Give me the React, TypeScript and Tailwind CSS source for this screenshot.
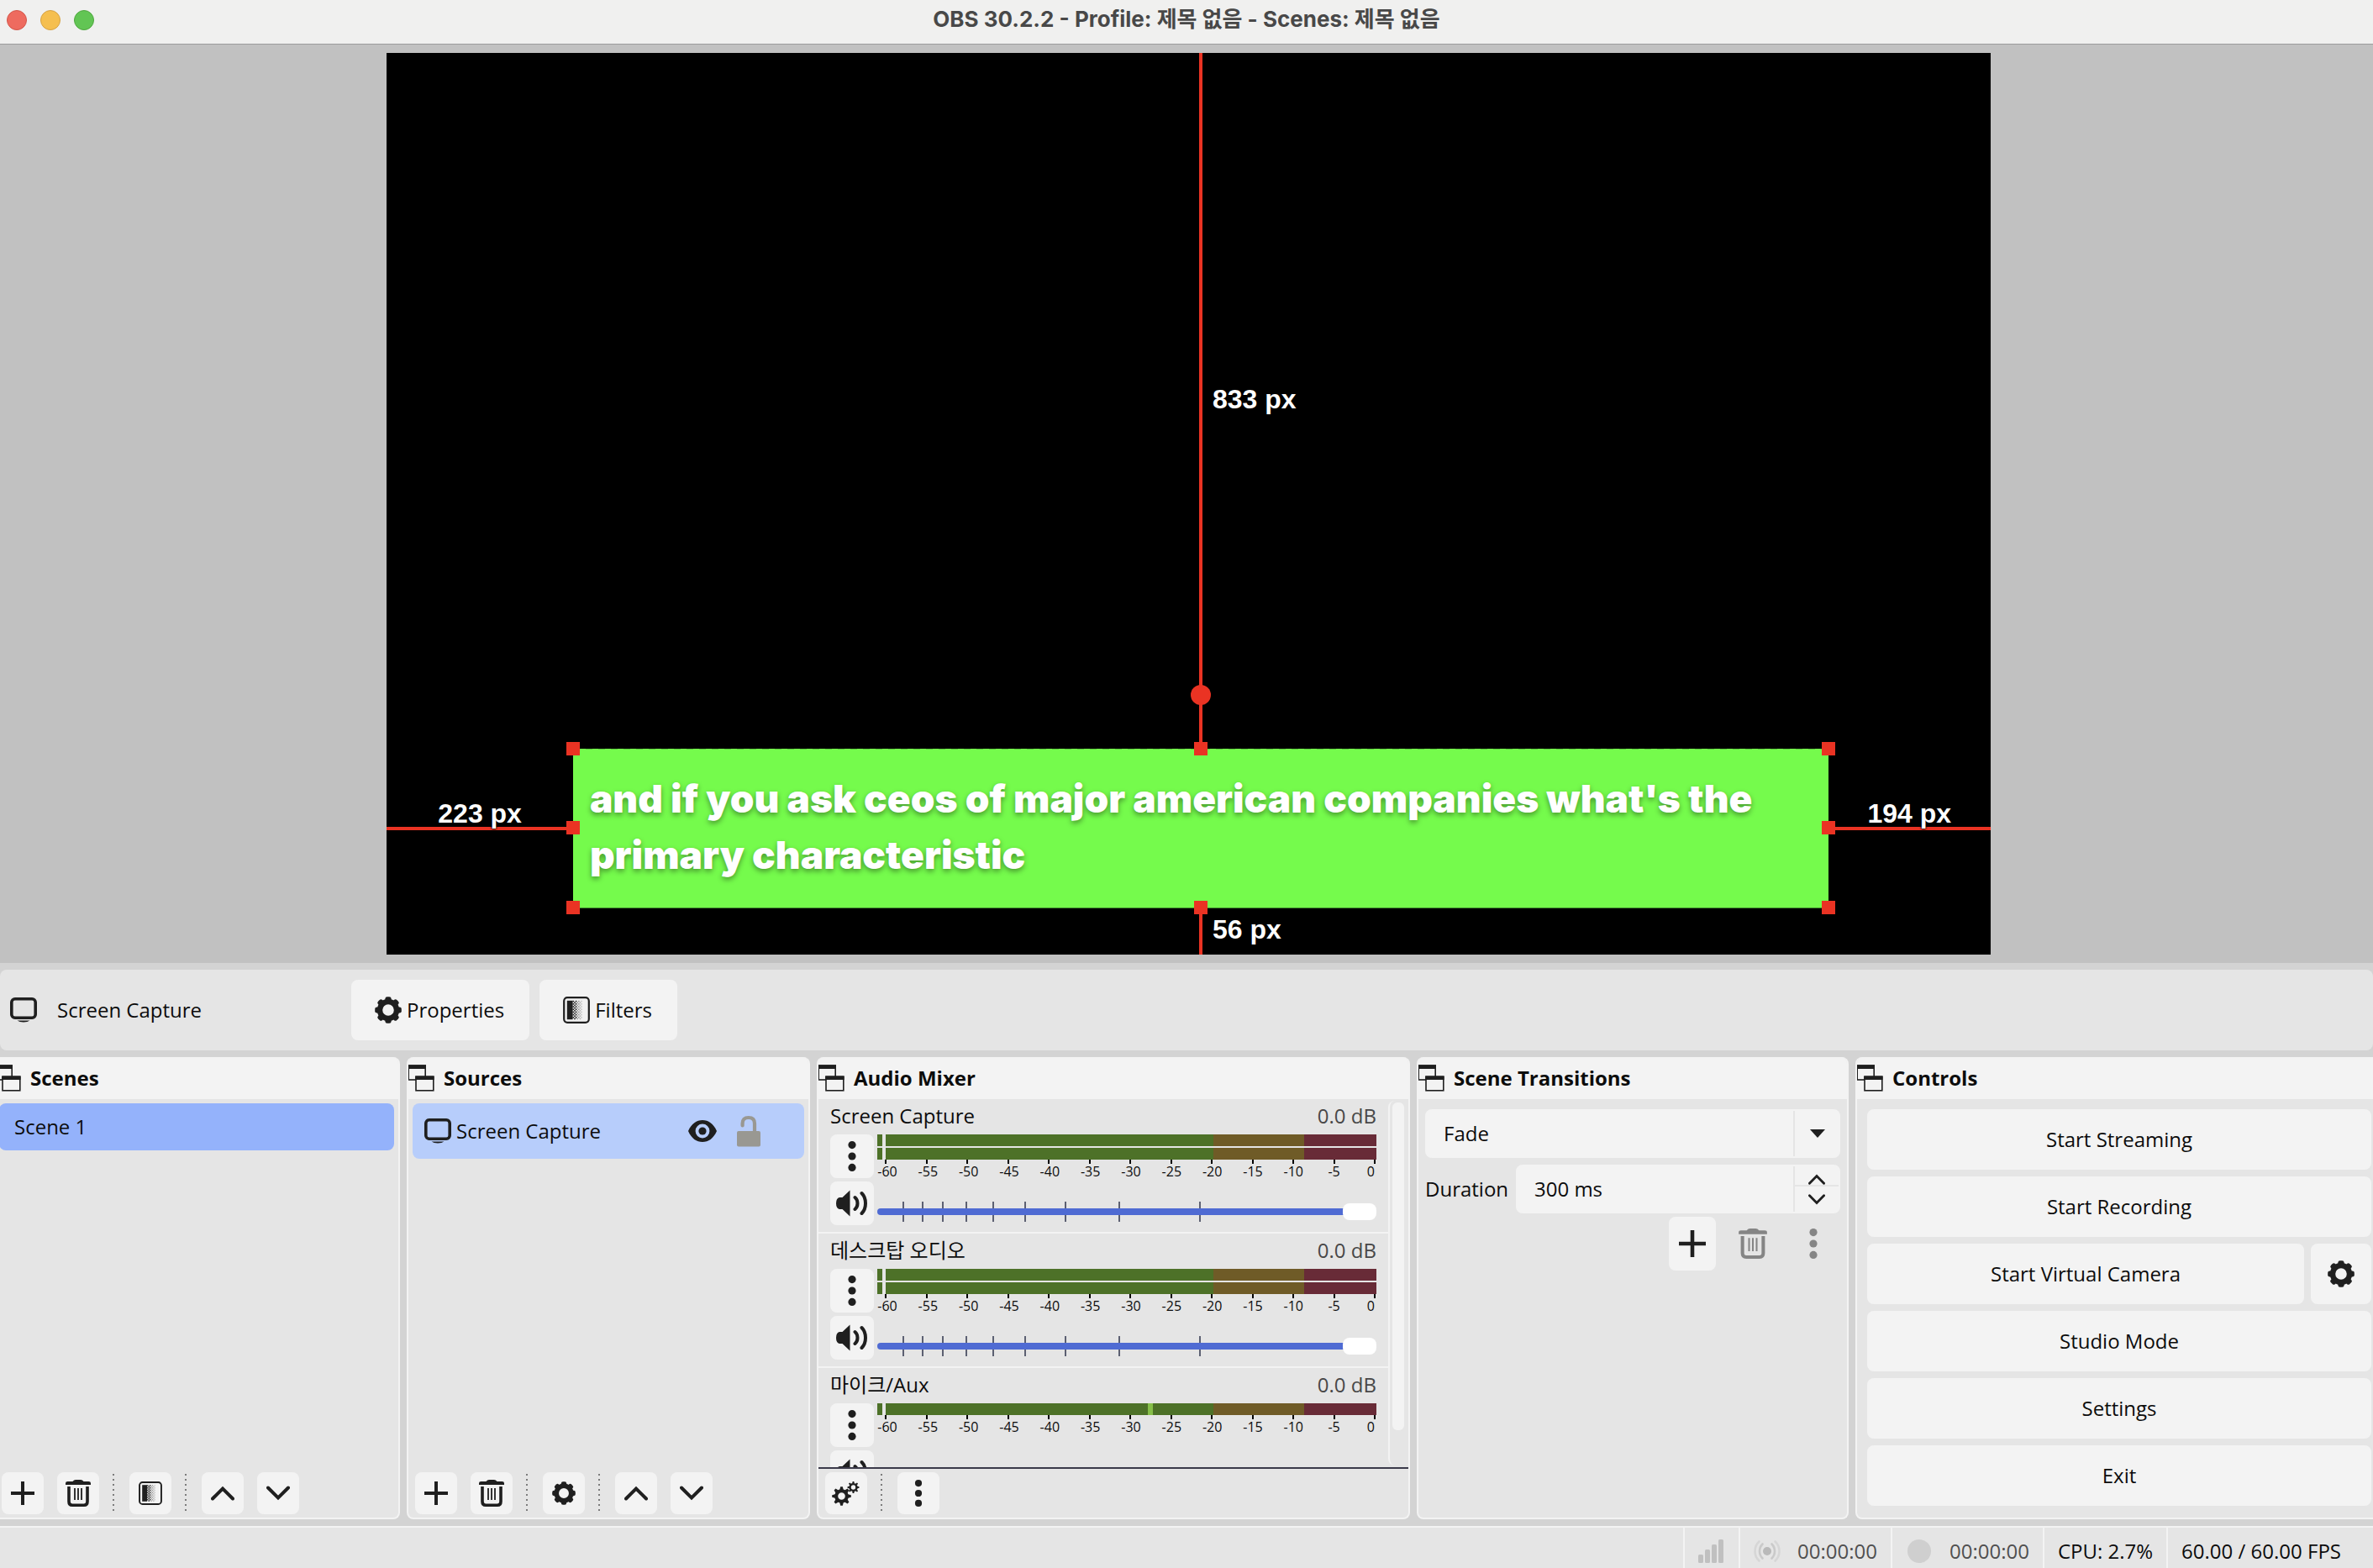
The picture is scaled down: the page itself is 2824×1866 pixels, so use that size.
import { useState, type ReactNode } from "react";

interface MixerChannel {
  name: string;
  level: string;
  bars: number;
  peak: boolean;
}

const channels: MixerChannel[] = [
  { name: "Screen Capture", level: "0.0 dB", bars: 2, peak: false },
  { name: "데스크탑 오디오", level: "0.0 dB", bars: 2, peak: false },
  { name: "마이크/Aux", level: "0.0 dB", bars: 1, peak: true },
];

const scaleLabels = [-60, -55, -50, -45, -40, -35, -30, -25, -20, -15, -10, -5, 0];

// fader detents, as a share of the track
const faderTicks = [5, 9, 13, 17.6, 23, 29.4, 37.5, 48.3, 64.4];

const gearTeeth = [0, 45, 90, 135, 180, 225, 270, 315];

// dither columns of the filter icon, fading to the right
const ditherColumns = ["#1f1f1f", "#1f1f1f", "#1f1f1f", "#9a9a9a", "#9a9a9a", "#b4b4b4", "#c9c9c9"];
const ditherRows = [0, 1, 2, 3, 4, 5, 6];

function GearIcon({ className }: { className: string }) {
  return (
    <svg viewBox="-16 -16 32 32" className={className} aria-hidden="true">
      <circle r="10" fill="none" stroke="#1f1f1f" strokeWidth="6.4" />
      {gearTeeth.map((angle) => (
        <rect
          key={angle}
          x="-3.6"
          y="-15.8"
          width="7.2"
          height="7"
          rx="2.4"
          fill="#1f1f1f"
          transform={`rotate(${angle})`}
        />
      ))}
    </svg>
  );
}

function GearsIcon() {
  return (
    <svg viewBox="0 0 34 30" className="h-[30px] w-[34px]" fill="#1f1f1f" aria-hidden="true">
      <g transform="translate(11.5 18.5)">
        <circle r="6.3" fill="none" stroke="#1f1f1f" strokeWidth="4" />
        {gearTeeth.map((angle) => (
          <path key={angle} d="M-2.4 -7L-1.3 -11.3H1.3L2.4 -7Z" transform={`rotate(${angle})`} />
        ))}
      </g>
      <g transform="translate(25.5 8)">
        <circle r="3.9" fill="none" stroke="#1f1f1f" strokeWidth="2.4" />
        {gearTeeth.map((angle) => (
          <path key={angle} d="M-1.4 -4.4L-0.8 -7H0.8L1.4 -4.4Z" transform={`rotate(${angle})`} />
        ))}
      </g>
    </svg>
  );
}

function MonitorIcon() {
  return (
    <svg viewBox="0 0 32 32" className="size-8 shrink-0" aria-hidden="true">
      <rect x="1.8" y="2.8" width="28.4" height="22.4" rx="4" fill="none" stroke="#1f1f1f" strokeWidth="3.6" />
      <path d="M8.5 28.6H23.5Q21 30.6 16 30.6T8.5 28.6Z" fill="#1f1f1f" />
    </svg>
  );
}

function FilterIcon({ className }: { className: string }) {
  return (
    <svg viewBox="0 0 32 32" className={className} aria-hidden="true">
      <rect x="1.2" y="1.2" width="29.6" height="29.6" rx="4" fill="none" stroke="#1f1f1f" strokeWidth="2.2" />
      <rect x="4.8" y="4.8" width="6.8" height="22.4" fill="#1f1f1f" />
      {ditherColumns.map((color, col) =>
        ditherRows.map((row) => (
          <rect
            key={`${col}-${row}`}
            x={11.6 + col * 1.6}
            y={4.8 + row * 3.2 + (col % 2) * 1.6}
            width="1.6"
            height="1.6"
            fill={color}
          />
        ))
      )}
    </svg>
  );
}

function PlusIcon({ className }: { className: string }) {
  return (
    <svg viewBox="0 0 28 28" className={className} aria-hidden="true">
      <path d="M14 0V28M0 14H28" stroke="#1f1f1f" strokeWidth="4" />
    </svg>
  );
}

function TrashIcon({ className }: { className: string }) {
  return (
    <svg viewBox="0 0 30 32" className={className} fill="currentColor" aria-hidden="true">
      <path d="M0 6V4Q0 2 2.5 2H8.5Q10 0 12 0H18Q20 0 21.5 2H27.5Q30 2 30 4V6Z" />
      <path d="M4 8V26Q4 30.2 8 30.2H22Q26 30.2 26 26V8" fill="none" stroke="currentColor" strokeWidth="3.6" />
      <path d="M11 10V24M15 10V24M19 10V24" stroke="currentColor" strokeWidth="1.8" />
    </svg>
  );
}

function ChevronIcon({ down = false, className }: { down?: boolean; className: string }) {
  return (
    <svg viewBox="0 0 28 18" className={className} aria-hidden="true">
      <path
        d={down ? "M2 2.5L14 14.5L26 2.5" : "M2 15.5L14 3.5L26 15.5"}
        fill="none"
        stroke="#1f1f1f"
        strokeWidth="4"
        strokeLinecap="round"
      />
    </svg>
  );
}

function DotsIcon({ className }: { className: string }) {
  return (
    <svg viewBox="0 0 10 36" className={className} fill="currentColor" aria-hidden="true">
      <circle cx="5" cy="4.6" r="4.6" />
      <circle cx="5" cy="18" r="4.6" />
      <circle cx="5" cy="31.4" r="4.6" />
    </svg>
  );
}

function SpeakerIcon() {
  return (
    <svg viewBox="0 0 38 32" className="h-8 w-[38px]" aria-hidden="true">
      <path d="M0 16Q0 10 4 9H7.5L16.5 0.5V31.5L7.5 23H4Q0 22 0 16Z" fill="#1f1f1f" />
      <path
        d="M22.5 9Q25.5 11.5 25.5 16T22.5 23M30.5 4Q35 8.5 35 16T30.5 28"
        fill="none"
        stroke="#1f1f1f"
        strokeWidth="4"
        strokeLinecap="round"
      />
    </svg>
  );
}

function DockIcon() {
  return (
    <svg viewBox="1 0 32 32" className="size-8 shrink-0" aria-hidden="true">
      <rect x="1.2" y="1" width="20" height="17" fill="#f3f3f3" stroke="#1f1f1f" strokeWidth="1.6" />
      <rect x="0.4" y="0.4" width="21.6" height="4.6" fill="#1f1f1f" />
      <rect x="10" y="14.4" width="20.8" height="16.4" fill="#f3f3f3" stroke="#1f1f1f" strokeWidth="1.6" />
      <rect x="9.2" y="13.4" width="22.4" height="4.6" fill="#1f1f1f" />
    </svg>
  );
}

function Dock({ title, children }: { title: string; children: ReactNode }) {
  return (
    <section className="flex min-w-0 flex-col overflow-hidden rounded-lg border-2 border-t-0 border-[#f3f3f3] bg-[#e5e5e5]">
      <header className="flex h-[50px] shrink-0 items-center gap-2.5 bg-[#f3f3f3]">
        <DockIcon />
        <h2 className="font-bold">{title}</h2>
      </header>
      {children}
    </section>
  );
}

function ToolButton({ label, children }: { label: string; children: ReactNode }) {
  return (
    <button
      type="button"
      aria-label={label}
      className="flex size-[50px] items-center justify-center rounded-lg bg-[#f3f3f3]"
    >
      {children}
    </button>
  );
}

function ToolSeparator() {
  return (
    <div className="h-[46px] w-1 bg-[repeating-linear-gradient(#7c7c7c_0_2px,transparent_2px_6px)] bg-[length:2px_100%] bg-no-repeat" />
  );
}

function Toolbar({ children }: { children: ReactNode }) {
  return <div className="flex shrink-0 items-center gap-4 px-2 py-1">{children}</div>;
}

function Handle({ className }: { className: string }) {
  return <div className={`absolute size-4 -translate-1/2 bg-[#ea3323] ${className}`} />;
}

function Preview() {
  const label =
    "absolute font-['Liberation_Sans',sans-serif] text-[32px] leading-9 font-bold whitespace-nowrap text-white [text-shadow:0_0_3px_#000,0_0_2px_#000,0_0_2px_#000]";

  return (
    <div className="flex flex-1 items-center justify-center bg-[#c1c1c1] pl-[5px]">
      <div className="grid aspect-video w-[67.7%] grid-cols-[minmax(0,223fr)_minmax(0,1503fr)_minmax(0,194fr)] grid-rows-[minmax(0,833fr)_minmax(0,191fr)_minmax(0,56fr)] bg-black">
        <div className="relative col-start-2">
          <div className="absolute inset-y-0 left-1/2 w-1 -translate-x-1/2 bg-[#ea3323]" />
          <div className="absolute bottom-[52px] left-1/2 size-6 -translate-x-1/2 rounded-full bg-[#ea3323]" />
          <span className={`${label} top-1/2 left-1/2 -mt-0.5 ml-3.5 -translate-y-1/2`}>833 px</span>
        </div>

        <div className="relative col-start-1 row-start-2">
          <div className="absolute inset-x-0 top-1/2 h-1 -translate-y-1/2 bg-[#ea3323]" />
          <span className={`${label} bottom-1/2 left-1/2 -translate-x-1/2`}>223 px</span>
        </div>

        <div className="relative row-start-2 border-b border-[#3f8f2a] bg-[#75fb4c] pt-[26px] pl-5">
          <div className="absolute inset-x-0 top-0 h-px bg-[repeating-linear-gradient(90deg,#5fce3e_0_8px,transparent_8px_15px)]" />
          <p className="font-['Inter',sans-serif] text-[46px] leading-[67px] font-black text-white [text-shadow:0_3px_6px_rgba(0,0,0,0.4)]">
            and if you ask ceos of major american companies what's the
            <br />
            primary characteristic
          </p>
          <Handle className="top-0 left-0" />
          <Handle className="top-0 left-1/2" />
          <Handle className="top-0 left-full" />
          <Handle className="top-1/2 left-0" />
          <Handle className="top-1/2 left-full" />
          <Handle className="top-full left-0" />
          <Handle className="top-full left-1/2" />
          <Handle className="top-full left-full" />
        </div>

        <div className="relative row-start-2">
          <div className="absolute inset-x-0 top-1/2 h-1 -translate-y-1/2 bg-[#ea3323]" />
          <span className={`${label} bottom-1/2 left-1/2 -translate-x-1/2`}>194 px</span>
        </div>

        <div className="relative col-start-2 row-start-3">
          <div className="absolute inset-y-0 left-1/2 w-1 -translate-x-1/2 bg-[#ea3323]" />
          <span className={`${label} top-1/2 left-1/2 -mt-0.5 ml-3.5 -translate-y-1/2`}>56 px</span>
        </div>
      </div>
    </div>
  );
}

function ContextBar() {
  const button = "flex h-[72px] items-center gap-1.5 rounded-lg bg-[#f3f3f3] pr-[30px] pl-7";

  return (
    <div className="my-2 flex items-center rounded-lg bg-[#e5e5e5] py-3 pl-3">
      <div className="flex w-[406px] items-center gap-6">
        <MonitorIcon />
        <span>Screen Capture</span>
      </div>
      <div className="flex gap-3">
        <button type="button" className={button}>
          <GearIcon className="size-8" />
          Properties
        </button>
        <button type="button" className={button}>
          <FilterIcon className="size-8" />
          Filters
        </button>
      </div>
    </div>
  );
}

function ScenesDock() {
  return (
    <Dock title="Scenes">
      <ul className="flex-1 p-[5px]">
        <li className="flex h-14 items-center rounded-lg bg-[#94b2fb] px-[18px]">Scene 1</li>
      </ul>
      <Toolbar>
        <ToolButton label="Add scene">
          <PlusIcon className="size-7" />
        </ToolButton>
        <ToolButton label="Remove scene">
          <TrashIcon className="h-8 w-[30px] text-[#1f1f1f]" />
        </ToolButton>
        <ToolSeparator />
        <ToolButton label="Scene filters">
          <FilterIcon className="size-7" />
        </ToolButton>
        <ToolSeparator />
        <ToolButton label="Move scene up">
          <ChevronIcon className="h-[18px] w-7" />
        </ToolButton>
        <ToolButton label="Move scene down">
          <ChevronIcon down className="h-[18px] w-7" />
        </ToolButton>
      </Toolbar>
    </Dock>
  );
}

function SourcesDock() {
  return (
    <Dock title="Sources">
      <ul className="flex-1 p-[5px]">
        <li className="flex h-[66px] items-center rounded-lg bg-[#b7cdfb] pr-13 pl-3.5">
          <MonitorIcon />
          <span className="ml-1.5 flex-1">Screen Capture</span>
          <button type="button" aria-label="Hide source" className="mr-6">
            <svg viewBox="0 0 34 28" className="h-7 w-[34px]" aria-hidden="true">
              <path
                fillRule="evenodd"
                d="M0 14C4 5 10 1 17 1S30 5 34 14C30 23 24 27 17 27S4 23 0 14ZM17 5.6A8.4 8.4 0 1 0 17 22.4A8.4 8.4 0 1 0 17 5.6Z"
                fill="#1f1f1f"
              />
              <circle cx="17" cy="14" r="4.6" fill="#1f1f1f" />
            </svg>
          </button>
          <button type="button" aria-label="Lock source">
            <svg viewBox="0 0 28 38" className="h-[38px] w-7" aria-hidden="true">
              <rect y="19" width="28" height="18.6" rx="2" fill="#999892" />
              <path
                d="M6.6 12.5V10Q6.6 3 13.8 3T21 10V20"
                fill="none"
                stroke="#999892"
                strokeWidth="4.2"
                strokeLinecap="round"
              />
            </svg>
          </button>
        </li>
      </ul>
      <Toolbar>
        <ToolButton label="Add source">
          <PlusIcon className="size-7" />
        </ToolButton>
        <ToolButton label="Remove source">
          <TrashIcon className="h-8 w-[30px] text-[#1f1f1f]" />
        </ToolButton>
        <ToolSeparator />
        <ToolButton label="Source properties">
          <GearIcon className="size-7" />
        </ToolButton>
        <ToolSeparator />
        <ToolButton label="Move source up">
          <ChevronIcon className="h-[18px] w-7" />
        </ToolButton>
        <ToolButton label="Move source down">
          <ChevronIcon down className="h-[18px] w-7" />
        </ToolButton>
      </Toolbar>
    </Dock>
  );
}

function MeterBar({ peak }: { peak: boolean }) {
  return (
    <div className="flex h-[14px]">
      <div className="w-1.5 bg-[#4d7128]" />
      <div className="ml-1 flex flex-1">
        <div className="flex flex-[390] justify-end bg-[#4d7128]">
          {peak && <div className="mr-[72px] w-1.5 bg-[#86bf49]" />}
        </div>
        <div className="flex-[108] bg-[#6f5b27]" />
        <div className="flex-[86] bg-[#682b37]" />
      </div>
    </div>
  );
}

function Channel({ channel }: { channel: MixerChannel }) {
  const [volume, setVolume] = useState(100);

  return (
    <div className="border-b-2 border-[#f3f3f3] px-3.5 pt-1 pb-2">
      <div className="mb-1.5 flex justify-between leading-8">
        <span>{channel.name}</span>
        <span className="text-[#484848]">{channel.level}</span>
      </div>
      <div className="flex gap-1">
        <div className="flex flex-col gap-1">
          <button
            type="button"
            aria-label={`${channel.name} options`}
            className="flex size-[52px] items-center justify-center rounded-lg bg-[#f3f3f3] text-[#1f1f1f]"
          >
            <DotsIcon className="h-9 w-2.5" />
          </button>
          <button
            type="button"
            aria-label={`Mute ${channel.name}`}
            className="flex size-[52px] items-center justify-center rounded-lg bg-[#f3f3f3]"
          >
            <SpeakerIcon />
          </button>
        </div>
        <div className="flex flex-1 flex-col justify-between pb-1">
          <div>
            <div className="flex flex-col gap-0.5">
              {Array.from({ length: channel.bars }, (_, i) => (
                <MeterBar key={i} peak={channel.peak} />
              ))}
            </div>
            <div className="flex justify-between pr-px pl-[9px]">
              {scaleLabels.map((value) => (
                <div key={value} className="h-[5px] w-0.5 bg-black" />
              ))}
            </div>
            <div className="flex justify-between pr-0.5 pl-3 text-base leading-[18px]">
              {scaleLabels.map((value) => (
                <span key={value} className="flex w-0 justify-center last:justify-end">
                  {value}
                </span>
              ))}
            </div>
          </div>
          <div className="relative h-6">
            {faderTicks.map((tick) => (
              <div
                key={tick}
                className="absolute inset-y-0 w-0.5 bg-[#5c6072]"
                style={{ left: `${tick}%` }}
              />
            ))}
            <input
              type="range"
              min={0}
              max={100}
              value={volume}
              onChange={(e) => setVolume(Number(e.target.value))}
              aria-label={`${channel.name} volume`}
              className="absolute inset-0 w-full appearance-none bg-transparent [&::-webkit-slider-runnable-track]:h-2 [&::-webkit-slider-runnable-track]:rounded-full [&::-webkit-slider-runnable-track]:bg-[#4f6bd3] [&::-webkit-slider-thumb]:-mt-1.5 [&::-webkit-slider-thumb]:h-5 [&::-webkit-slider-thumb]:w-10 [&::-webkit-slider-thumb]:appearance-none [&::-webkit-slider-thumb]:rounded-lg [&::-webkit-slider-thumb]:bg-white"
            />
          </div>
        </div>
      </div>
    </div>
  );
}

function MixerDock() {
  return (
    <Dock title="Audio Mixer">
      <div className="flex h-0 grow overflow-hidden border-b-2 border-[#3b3a4a]">
        <div className="flex-1">
          {channels.map((channel) => (
            <Channel key={channel.name} channel={channel} />
          ))}
        </div>
        <div className="my-0.5 w-6 rounded-lg border-l-2 border-[#f3f3f3] pt-0.5 pl-[3px]">
          <div className="h-[390px] w-[14px] rounded-md bg-[#f3f3f3]" />
        </div>
      </div>
      <Toolbar>
        <ToolButton label="Advanced audio properties">
          <GearsIcon />
        </ToolButton>
        <ToolSeparator />
        <ToolButton label="Mixer menu">
          <DotsIcon className="h-8 w-2.5 text-[#1f1f1f]" />
        </ToolButton>
      </Toolbar>
    </Dock>
  );
}

function TransitionsDock() {
  const [duration, setDuration] = useState("300 ms");

  return (
    <Dock title="Scene Transitions">
      <div className="flex flex-col gap-2 px-2 pt-3">
        <div className="relative h-[58px] rounded-lg bg-[#f3f3f3]">
          <select aria-label="Transition" className="size-full appearance-none rounded-lg bg-transparent px-[22px]">
            <option>Fade</option>
          </select>
          <div className="pointer-events-none absolute inset-y-0.5 right-0 flex w-14 items-center justify-center border-l-2 border-[#e5e5e5]">
            <svg viewBox="0 0 18 10" className="h-2.5 w-[18px]" aria-hidden="true">
              <path d="M0 0H18L9 10Z" fill="#1f1f1f" />
            </svg>
          </div>
        </div>
        <div className="flex items-center">
          <label htmlFor="duration" className="w-[108px] shrink-0">
            Duration
          </label>
          <div className="flex h-[58px] min-w-0 flex-1 rounded-lg bg-[#f3f3f3] py-0.5">
            <input
              id="duration"
              type="text"
              value={duration}
              onChange={(e) => setDuration(e.target.value)}
              className="w-full min-w-0 flex-1 bg-transparent pl-[22px]"
            />
            <div className="flex w-14 flex-col border-l-2 border-[#e5e5e5] pr-0.5">
              <button
                type="button"
                aria-label="Increase duration"
                className="flex h-6 items-end justify-center border-b-2 border-[#e5e5e5]"
              >
                <ChevronIcon className="h-[13px] w-5" />
              </button>
              <button
                type="button"
                aria-label="Decrease duration"
                className="flex flex-1 items-center justify-center"
              >
                <ChevronIcon down className="h-[13px] w-5" />
              </button>
            </div>
          </div>
        </div>
      </div>
      <div className="mt-1 flex justify-end gap-4 px-3">
        <button
          type="button"
          aria-label="Add transition"
          className="flex h-16 w-14 items-center justify-center rounded-lg bg-[#f3f3f3]"
        >
          <PlusIcon className="size-8" />
        </button>
        <button
          type="button"
          disabled
          aria-label="Remove transition"
          className="flex h-16 w-14 items-center justify-center text-[#858585]"
        >
          <TrashIcon className="h-9 w-[34px]" />
        </button>
        <button
          type="button"
          disabled
          aria-label="Transition menu"
          className="flex h-16 w-14 items-center justify-center text-[#858585]"
        >
          <DotsIcon className="h-9 w-2.5" />
        </button>
      </div>
    </Dock>
  );
}

function ControlsDock() {
  const button = "h-[72px] rounded-lg bg-[#f3f3f3]";

  return (
    <Dock title="Controls">
      <div className="flex flex-col gap-2 pt-3 pr-2 pb-3.5 pl-3">
        <button type="button" className={button}>
          Start Streaming
        </button>
        <button type="button" className={button}>
          Start Recording
        </button>
        <div className="flex gap-2">
          <button type="button" className={`${button} flex-1`}>
            Start Virtual Camera
          </button>
          <button
            type="button"
            aria-label="Virtual camera settings"
            className={`${button} flex w-[72px] items-center justify-center`}
          >
            <GearIcon className="size-8" />
          </button>
        </div>
        <button type="button" className={button}>
          Studio Mode
        </button>
        <button type="button" className={button}>
          Settings
        </button>
        <button type="button" className={button}>
          Exit
        </button>
      </div>
    </Dock>
  );
}

function StatusBar() {
  const cell = "flex items-center gap-5 border-l-2 border-[#f3f3f3] px-4 pt-2";

  return (
    <footer className="mt-2 flex h-[50px] justify-end border-t-2 border-[#f3f3f3] bg-[#e5e5e5] pr-[22px]">
      <div className={cell}>
        <svg viewBox="0 0 32 28" className="h-7 w-8" fill="#c0c0c0" aria-label="Network">
          <rect x="0" y="18" width="6" height="10" rx="1.5" />
          <rect x="8" y="12" width="6" height="16" rx="1.5" />
          <rect x="16" y="6" width="6" height="22" rx="1.5" />
          <rect x="24" y="0" width="6" height="28" rx="1.5" />
        </svg>
      </div>
      <div className={cell}>
        <svg viewBox="0 0 32 28" className="h-7 w-8" fill="none" strokeWidth="2.6" strokeLinecap="round" aria-label="Stream">
          <circle cx="16" cy="14" r="5" fill="#b9b9b9" />
          <path d="M10.5 5.5Q7 9 7 14T10.5 22.5M21.5 5.5Q25 9 25 14T21.5 22.5" stroke="#cacaca" />
          <path d="M6.5 2.5Q1.5 7 1.5 14T6.5 25.5M25.5 2.5Q30.5 7 30.5 14T25.5 25.5" stroke="#d6d6d6" />
        </svg>
        <span className="text-[#505050]">00:00:00</span>
      </div>
      <div className={cell}>
        <div className="mx-0.5 size-7 rounded-full bg-[#cfcfcf]" />
        <span className="text-[#505050]">00:00:00</span>
      </div>
      <div className={cell}>CPU: 2.7%</div>
      <div className={cell}>60.00 / 60.00 FPS</div>
    </footer>
  );
}

export default function App() {
  return (
    <div className="flex min-h-screen flex-col overflow-hidden bg-[#d3d3d3] font-['Open_Sans','Noto_Sans_CJK_KR',sans-serif] text-2xl text-[#0c0c0c]">
      <header className="relative flex h-[53px] items-center justify-center border-b border-[#9c9c9c] bg-[#f0f0ef]">
        <div className="absolute top-3 left-2 flex gap-4">
          <button type="button" aria-label="Close" className="size-6 rounded-full border border-[#d35549] bg-[#ee6b5f]" />
          <button type="button" aria-label="Minimize" className="size-6 rounded-full border border-[#d6a243] bg-[#f5bf4f]" />
          <button type="button" aria-label="Zoom" className="size-6 rounded-full border border-[#4fa73f] bg-[#62c554]" />
        </div>
        <h1 className="pb-1.5 font-['Inter','Noto_Sans_CJK_KR',sans-serif] text-[26px] leading-8 font-bold text-[#484848]">
          OBS 30.2.2 - Profile: 제목 없음 - Scenes: 제목 없음
        </h1>
      </header>

      <Preview />
      <ContextBar />

      <main className="-mx-2 grid grid-cols-[minmax(0,484fr)_minmax(0,480fr)_minmax(0,706fr)_minmax(0,514fr)_minmax(0,624fr)] gap-2">
        <ScenesDock />
        <SourcesDock />
        <MixerDock />
        <TransitionsDock />
        <ControlsDock />
      </main>

      <StatusBar />
    </div>
  );
}
